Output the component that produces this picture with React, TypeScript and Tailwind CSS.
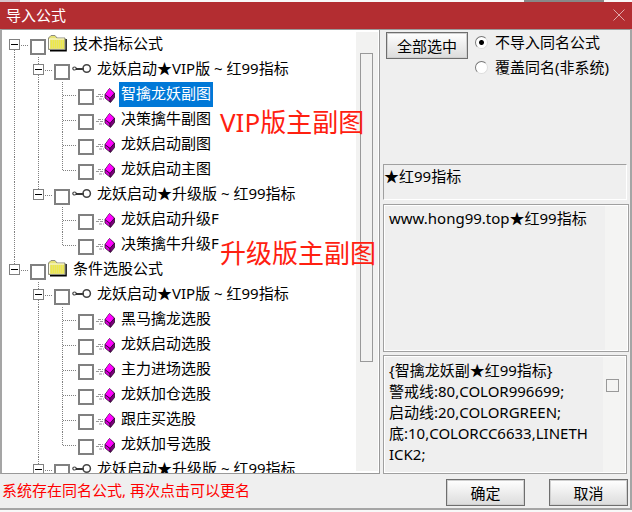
import { useState } from 'react';

type Guide = 'blank' | 'line' | 'tee' | 'end' | 'rootFirst' | 'openTee' | 'openEnd';
type Kind = 'folder' | 'key' | 'gem';

interface TreeItem {
    guides: Guide[];
    kind: Kind;
    name: string;
}

const treeItems: TreeItem[] = [
    { guides: ['rootFirst'], kind: 'folder', name: '技术指标公式' },
    { guides: ['line', 'openTee'], kind: 'key', name: '龙妖启动★VIP版 ~ 红99指标' },
    { guides: ['line', 'line', 'tee'], kind: 'gem', name: '智擒龙妖副图' },
    { guides: ['line', 'line', 'tee'], kind: 'gem', name: '决策擒牛副图' },
    { guides: ['line', 'line', 'tee'], kind: 'gem', name: '龙妖启动副图' },
    { guides: ['line', 'line', 'end'], kind: 'gem', name: '龙妖启动主图' },
    { guides: ['line', 'openEnd'], kind: 'key', name: '龙妖启动★升级版 ~ 红99指标' },
    { guides: ['line', 'blank', 'tee'], kind: 'gem', name: '龙妖启动升级F' },
    { guides: ['line', 'blank', 'end'], kind: 'gem', name: '决策擒牛升级F' },
    { guides: ['openEnd'], kind: 'folder', name: '条件选股公式' },
    { guides: ['blank', 'openTee'], kind: 'key', name: '龙妖启动★VIP版 ~ 红99指标' },
    { guides: ['blank', 'line', 'tee'], kind: 'gem', name: '黑马擒龙选股' },
    { guides: ['blank', 'line', 'tee'], kind: 'gem', name: '龙妖启动选股' },
    { guides: ['blank', 'line', 'tee'], kind: 'gem', name: '主力进场选股' },
    { guides: ['blank', 'line', 'tee'], kind: 'gem', name: '龙妖加仓选股' },
    { guides: ['blank', 'line', 'tee'], kind: 'gem', name: '跟庄买选股' },
    { guides: ['blank', 'line', 'end'], kind: 'gem', name: '龙妖加号选股' },
    { guides: ['blank', 'openEnd'], kind: 'key', name: '龙妖启动★升级版 ~ 红99指标' }
];

// 树形连接线
const GuideCell = ({ type }: { type: Guide }) => {
    const isOpen = type === 'rootFirst' || type === 'openTee' || type === 'openEnd';
    const up = type !== 'blank' && type !== 'rootFirst';
    const down = type === 'line' || type === 'tee' || type === 'openTee' || type === 'rootFirst';
    const branch = type === 'tee' || type === 'end';

    return (
        <svg className="h-[25px] w-6 shrink-0 overflow-visible" viewBox="0 0 24 25" fill="none" shapeRendering="crispEdges">
            <g stroke="#808080" strokeDasharray="1 1">
                {up && <path d="M12.5 0V13" />}
                {down && <path d="M12.5 12V25" />}
                {branch && <path d="M13 13.5H26" />}
                {isOpen && <path d="M19 13.5H26" />}
            </g>
            {isOpen && (
                <>
                    <rect x="7.5" y="7.5" width="10" height="10" fill="#fff" stroke="#808080" />
                    <path d="M9 12.5H16" stroke="#000" />
                </>
            )}
        </svg>
    );
};

const FolderIcon = () => (
    <svg className="mb-1 h-5 w-5 shrink-0" viewBox="0 0 20 20">
        <path d="M2 17.8H18V6" fill="none" stroke="#000" strokeWidth="1.6" />
        <path d="M.5 16.5V5L3 2.5H7L9 5H17V16.5Z" fill="#e6e274" stroke="#8c8c80" />
        <path d="M1.5 15.5V6H16" fill="none" stroke="#fffde0" />
        <path d="M3 8H16M3 10H16M3 12H16M3 14H16" stroke="#f4ef20" strokeDasharray="1 1" />
    </svg>
);

const KeyIcon = () => (
    <svg className="h-5 w-5 shrink-0" viewBox="0 0 20 20" fill="none" stroke="#444">
        <ellipse cx="2.5" cy="8.5" rx="1.7" ry="1.5" strokeWidth="1.2" />
        <path d="M4 9H12" stroke="#222" strokeWidth="1.8" />
        <circle cx="14.7" cy="8.5" r="3.7" strokeWidth="1.5" />
    </svg>
);

const GemIcon = () => (
    <svg className="h-5 w-5 shrink-0" viewBox="0 0 20 20">
        <path d="M2 9.5H7M0 11.5H8M3 14H8" stroke="#999" strokeDasharray="3 1" />
        <path d="M13.5 3.5L18.5 8V12.5L14.5 17.5L9 13V9.5Z" fill="#7a007a" stroke="#100010" strokeWidth=".7" />
        <path d="M13.5 3.5L18 8.2L14 13L9.2 9.5Z" fill="#ff00ff" />
        <path d="M9.5 10.3L13.5 13.7V16.2L9.5 12.9Z" fill="#d800d8" />
        <path d="M9.2 9.7L14 13.4L18.3 8.4M14 13.4V17" fill="none" stroke="#200020" strokeWidth=".7" />
    </svg>
);

const TreeRow = ({ item, selected, onSelect }: { item: TreeItem; selected: boolean; onSelect: () => void }) => (
    <li className="flex h-[25px] items-center">
        {item.guides.map((guide, i) => (
            <GuideCell key={i} type={guide} />
        ))}
        <label className="flex h-full items-center" onClick={onSelect}>
            <input
                type="checkbox"
                className="mb-0.5 ml-1 mr-0.5 h-4 w-4 shrink-0 appearance-none self-end border-2 border-[#808080] bg-white checked:bg-[#0078d7]"
            />
            {item.kind === 'folder' && <FolderIcon />}
            {item.kind === 'key' && <KeyIcon />}
            {item.kind === 'gem' && <GemIcon />}
            <span
                className={`ml-[3px] h-[25px] whitespace-pre px-0.5 leading-[22px] ${selected ? 'bg-[#0078d7] text-white' : 'text-black'}`}
            >
                {item.name}
            </span>
        </label>
    </li>
);

const buttonClass =
    'h-[27px] border border-[#6e6e6e] bg-linear-to-b from-white to-[#dcdcdc] text-center leading-[22px] ring-1 ring-inset ring-[#d0d0d0]';
const radioClass =
    'h-[13px] w-[13px] appearance-none rounded-full border border-t-[#777] border-l-[#777] border-r-[#ddd] border-b-[#ddd] bg-white checked:bg-[radial-gradient(circle,#000_2px,transparent_3px)]';
const boxClass = 'border border-[#a0a0a0] ring-1 ring-inset ring-white';

export default function App() {
    const [selected, setSelected] = useState(2);

    return (
        <div className="flex h-screen flex-col bg-[#f8f8f8] font-['Noto_Sans','Noto_Sans_CJK_SC',sans-serif] text-[15px] text-black">
            {/* 后方窗口露出的边缘 */}
            <div className="flex h-0.5 shrink-0 justify-between">
                <div className="w-5 bg-[#d8c4cc]" />
                <div className="mr-7 w-20 bg-[#888]" />
            </div>

            <main className="flex min-h-0 flex-1 flex-col border-r-2 border-b-2 border-[#a5a5a5] bg-[#efefef]">
                <header className="-mr-0.5 flex h-[27px] shrink-0 items-center justify-between bg-[#b32d31] pl-1.5 pr-[7px] text-white">
                    <h1 className="pb-0.5 leading-6">导入公式</h1>
                    <button type="button" aria-label="关闭" className="pb-0.5">
                        <svg className="h-3 w-3" viewBox="0 0 12 12" stroke="#e0a8aa">
                            <path d="M.5.5L11.5 11.5M11.5.5L.5 11.5" />
                        </svg>
                    </button>
                </header>

                <div className="flex min-h-0 flex-1">
                    {/* 公式列表 */}
                    <section className="relative flex min-w-0 flex-1 border border-l-2 border-[#999] border-l-[#a5a5a5] bg-white">
                        <ul className="min-w-0 flex-1 overflow-hidden pt-0.5">
                            {treeItems.map((item, i) => (
                                <TreeRow key={i} item={item} selected={selected === i} onSelect={() => setSelected(i)} />
                            ))}
                        </ul>
                        <div className="my-0.5 mr-px flex w-[22px] shrink-0 flex-col bg-[#f2f2f1] px-1 pt-[21px]">
                            <div className="h-[74%] w-[13px] border border-[#999]" />
                        </div>
                        <p className="absolute left-[218px] top-[76px] whitespace-nowrap text-[26px] leading-8 text-[#ff2010]">VIP版主副图</p>
                        <p className="absolute left-[218px] top-[207px] whitespace-nowrap text-[26px] leading-8 text-[#ff2010]">升级版主副图</p>
                    </section>

                    {/* 导入选项和公式说明 */}
                    <section className="flex w-[250px] shrink-0 flex-col border-t border-[#9a9a9a] pl-[3px] pr-px">
                        <div className="flex h-[134px] shrink-0 items-start gap-[7px] pl-[3px]">
                            <button type="button" className={`mt-0.5 w-[82px] ${buttonClass}`}>
                                全部选中
                            </button>
                            <div className="flex flex-col">
                                <label className="flex h-[25px] items-center gap-[7px]">
                                    <input type="radio" name="mode" defaultChecked className={radioClass} />
                                    不导入同名公式
                                </label>
                                <label className="flex h-[25px] items-center gap-[7px]">
                                    <input type="radio" name="mode" className={radioClass} />
                                    覆盖同名(非系统)
                                </label>
                            </div>
                        </div>
                        <div className="mb-1 mr-0.5 h-9 shrink-0 border border-t-[#a0a0a0] border-l-[#a0a0a0] border-r-white border-b-white leading-[22px]">
                            ★红99指标
                        </div>
                        <div className={`mb-[3px] flex min-h-0 flex-5 p-px ${boxClass}`}>
                            <textarea
                                readOnly
                                aria-label="公式说明"
                                className="min-w-0 flex-1 resize-none overflow-hidden break-all pl-1 leading-6 outline-none"
                                defaultValue="www.hong99.top★红99指标"
                            />
                            <div className="w-[22px] bg-[#f4f4f3]" />
                        </div>
                        <div className={`mr-0.5 flex min-h-0 flex-4 p-px ${boxClass}`}>
                            <textarea
                                readOnly
                                aria-label="公式源码"
                                className="min-w-0 flex-1 resize-none overflow-hidden break-all py-[3px] pl-1 pr-3 leading-[21px] outline-none"
                                defaultValue={'{智擒龙妖副★红99指标}\n警戒线:80,COLOR996699;\n启动线:20,COLORGREEN;\n底:10,COLORCC6633,LINETHICK2;'}
                            />
                            <div className="w-[22px] bg-[#f4f4f3] px-[3px] pt-[22px]">
                                <div className="h-[13px] w-[13px] border border-[#999]" />
                            </div>
                        </div>
                    </section>
                </div>

                <footer className="flex h-[34px] shrink-0 items-end gap-6 px-0.5 pb-0.5">
                    <p className="flex-1 self-center text-[#f00]">系统存在同名公式, 再次点击可以更名</p>
                    <button type="button" className={`w-[79px] ${buttonClass}`}>
                        确定
                    </button>
                    <button type="button" className={`w-[79px] ${buttonClass}`}>
                        取消
                    </button>
                </footer>
            </main>
            <div className="h-0.5 shrink-0" />
        </div>
    );
}
